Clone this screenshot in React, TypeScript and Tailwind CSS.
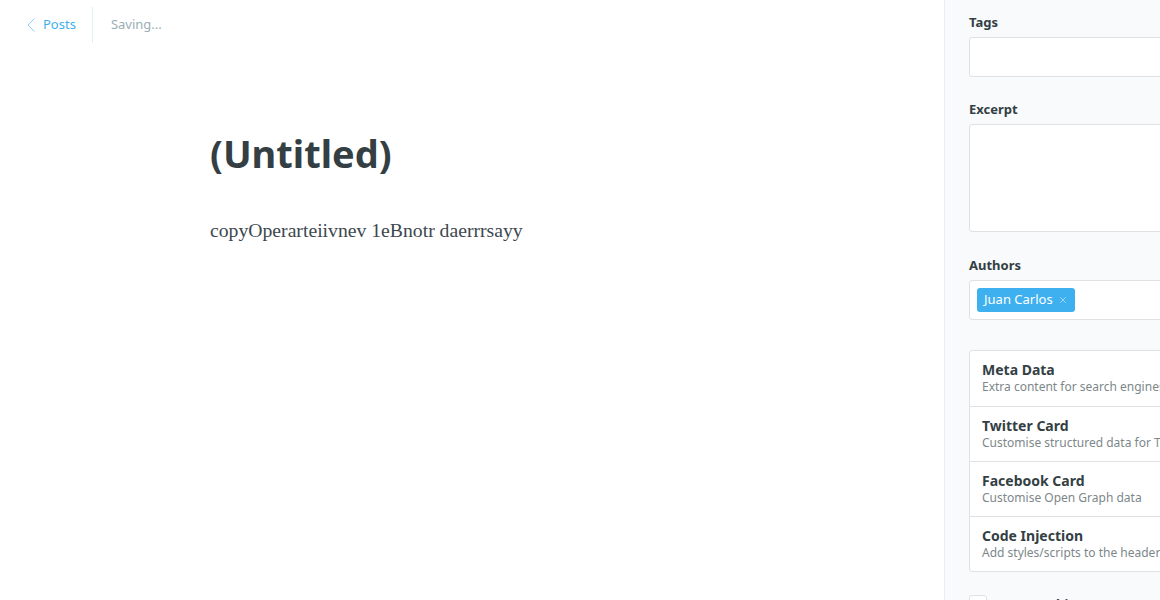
import { X } from 'lucide-react';

const cards = [
  { title: 'Meta Data', desc: 'Extra content for search engines' },
  { title: 'Twitter Card', desc: 'Customise structured data for Twitter' },
  { title: 'Facebook Card', desc: 'Customise Open Graph data' },
  { title: 'Code Injection', desc: 'Add styles/scripts to the header & footer' },
];

export default function App() {
  return (
    <div className="flex h-[600px] w-[1160px] overflow-hidden bg-white font-['Noto_Sans',sans-serif]">
      <main className="w-[944px] shrink-0">
        <header className="flex h-[50px] items-center pl-[27px]">
          <a className="flex items-center gap-[8px] text-[13px] text-[#3eb0ef]">
            <svg width="8" height="14" viewBox="0 0 8 14" fill="none" stroke="#8fd0f5" strokeWidth="1">
              <path d="M7.5 0.5 L1 7 L7.5 13.5" />
            </svg>
            Posts
          </a>
          <div className="ml-[16px] mr-[18px] h-[36px] w-px bg-[#e5eff5]" />
          <span className="text-[13px] text-[#9baeb8]">Saving...</span>
        </header>
        <div className="pl-[210px] pt-[75px]">
          <h1 className="text-[38px] font-bold leading-[56px] text-[#343f44]">(Untitled)</h1>
          <p className="mt-[35px] font-['Liberation_Serif',serif] text-[19.7px] text-[#3c484e]">
            copyOperarteiivnev 1eBnotr daerrrsayy
          </p>
        </div>
      </main>

      <aside className="w-[400px] shrink-0 border-l border-[#e5eff5] bg-[#f8fafb] pl-[24px] pt-[13px]">
        <label className="block text-[13px] font-bold text-[#343f44]">Tags</label>
        <div className="mt-[4px] h-[40px] rounded-[3px] border border-[#dfe1e3] bg-white" />

        <label className="mt-[23px] block text-[13px] font-bold text-[#343f44]">Excerpt</label>
        <div className="mt-[5px] h-[108px] rounded-[3px] border border-[#dfe1e3] bg-white" />

        <label className="mt-[24px] block text-[13px] font-bold text-[#343f44]">Authors</label>
        <div className="mt-[4px] flex h-[40px] items-center rounded-[3px] border border-[#dfe1e3] bg-white pl-[7px]">
          <span className="flex h-[24px] items-center gap-[5px] rounded-[3px] bg-[#3eb0ef] pl-[7px] pr-[7px] text-[13px] text-white">
            Juan Carlos
            <X size={10} strokeWidth={1.5} className="text-[#cfeafb]" />
          </span>
        </div>

        <ul className="mt-[30px] rounded-[3px] border border-[#dfe1e3] bg-white">
          {cards.map((c, i) => (
            <li
              key={c.title}
              className={`h-[55px] pl-[12px] pt-[9px] ${i > 0 ? 'border-t border-[#dfe1e3]' : ''}`}
            >
              <div className="text-[14px] font-bold leading-[19px] text-[#343f44]">{c.title}</div>
              <div className="whitespace-nowrap text-[12px] leading-[16px] text-[#7d878a]">{c.desc}</div>
            </li>
          ))}
        </ul>

        <div className="mt-[23px] flex items-center gap-[10px]">
          <span className="h-[18px] w-[18px] rounded-[3px] border border-[#dfe1e3] bg-white" />
          <span className="text-[13px] font-bold text-[#343f44]">Feature this post</span>
        </div>
      </aside>
    </div>
  );
}
